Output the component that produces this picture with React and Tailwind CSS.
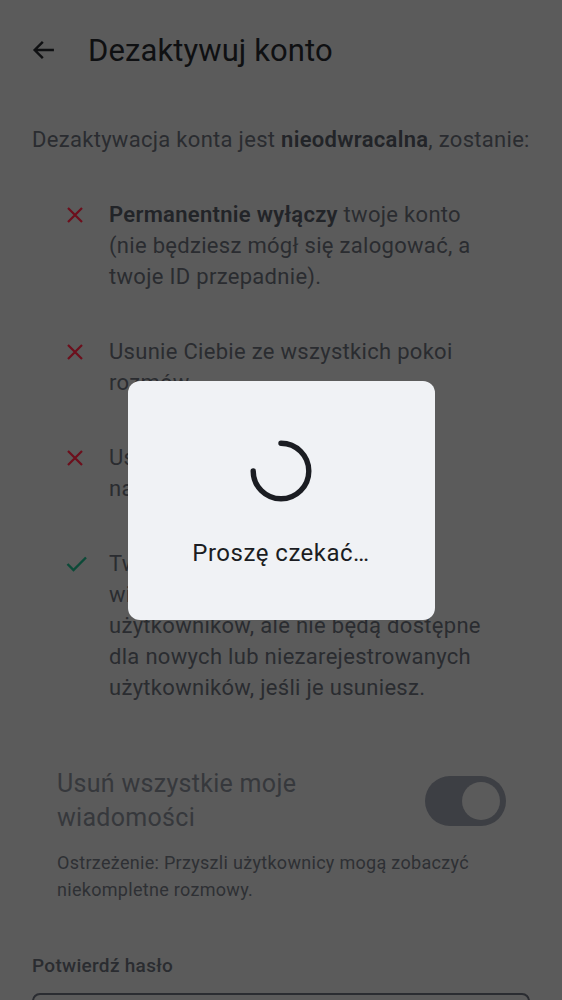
import React from 'react';

const XIcon = () => (
  <svg width="18" height="18" viewBox="0 0 18 18" className="shrink-0">
    <path d="M2 2 L16 16 M16 2 L2 16" stroke="#6d0f1c" strokeWidth="2.2" fill="none" />
  </svg>
);

const CheckIcon = () => (
  <svg width="22" height="18" viewBox="0 0 22 18" className="shrink-0">
    <path d="M1.5 9 L7.5 15 L20 2.5" stroke="#0c4a38" strokeWidth="2.4" fill="none" />
  </svg>
);

const items = [
  {
    ok: false,
    body: (
      <>
        <b className="font-semibold text-[#222428]">Permanentnie wyłączy</b> twoje konto (nie będziesz mógł się
        zalogować, a twoje ID przepadnie).
      </>
    ),
  },
  { ok: false, body: 'Usunie Ciebie ze wszystkich pokoi rozmów.' },
  {
    ok: false,
    body: (
      <>
        Usunie dane Twojego konta z
        <br />
        naszego serwera tożsamości.
      </>
    ),
  },
  {
    ok: true,
    body: 'Twoje wiadomości nadal będą widoczne dla zarejestrowanych użytkowników, ale nie będą dostępne dla nowych lub niezarejestrowanych użytkowników, jeśli je usuniesz.',
  },
];

export default function App() {
  return (
    <div
      className="relative h-screen w-full overflow-hidden bg-[#5b5b5b]"
      style={{ fontFamily: 'Roboto, "Noto Sans", sans-serif' }}
    >
      <header className="flex h-[100px] items-center pl-[30px]">
        <svg width="28" height="28" viewBox="0 0 24 24" className="shrink-0">
          <path d="M20.5 12 H4.5 M11 5 L4 12 L11 19" stroke="#0f1012" strokeWidth="2.1" fill="none" />
        </svg>
        <h1 className="ml-[30px] text-[31px] leading-none tracking-[0.1px] text-[#0f1012]">Dezaktywuj konto</h1>
      </header>

      <p className="mt-[24px] pl-[32px] text-[22px] leading-[31px] tracking-[0.3px] text-[#2a2c30]">
        Dezaktywacja konta jest <b className="font-semibold text-[#222428]">nieodwracalna</b>, zostanie:
      </p>

      <ul className="mt-[44px] flex flex-col gap-[44px] pl-[66px] pr-[64px]">
        {items.map((it, i) => (
          <li key={i} className="flex items-start">
            <div className="flex h-[31px] w-[43px] shrink-0 items-center">{it.ok ? <CheckIcon /> : <XIcon />}</div>
            <div className="text-[22px] leading-[31px] tracking-[0.3px] text-[#2a2c30]">{it.body}</div>
          </li>
        ))}
      </ul>

      <div className="mt-[64px] flex items-center justify-between pl-[57px] pr-[56px]">
        <div className="text-[25px] leading-[34px] tracking-[0.3px] text-[#36383c]">
          Usuń wszystkie moje
          <br />
          wiadomości
        </div>
        <div className="flex h-[50px] w-[81px] items-center justify-end rounded-full bg-[#3d3f44] pr-[6px]">
          <div className="h-[38px] w-[38px] rounded-full bg-[#5b5b5b]" />
        </div>
      </div>

      <p className="mt-[14px] pl-[57px] pr-[40px] text-[18px] leading-[27px] tracking-[0.3px] text-[#2e3034]">
        Ostrzeżenie: Przyszli użytkownicy mogą zobaczyć niekompletne rozmowy.
      </p>

      <label className="mt-[51px] block pl-[32px] text-[19px] font-medium leading-[24px] tracking-[0.3px] text-[#2a2c30]">
        Potwierdź hasło
      </label>
      <div className="mx-[32px] mt-[15px] h-[56px] rounded-[8px] border-2 border-[#2a2c31]" />

      <div className="absolute inset-0 flex items-center justify-center">
        <div className="flex h-[239px] w-[307px] flex-col items-center rounded-[12px] bg-[#f0f2f5] pt-[59px]">
          <svg width="62" height="62" viewBox="0 0 62 62">
            <path
              d="M31 3.2 A27.8 27.8 0 1 1 3.2 31"
              stroke="#1b1d22"
              strokeWidth="5.4"
              strokeLinecap="round"
              fill="none"
            />
          </svg>
          <div className="mt-[36px] text-[24px] leading-[30px] tracking-[0.5px] text-[#1b1d22]">Proszę czekać…</div>
        </div>
      </div>
    </div>
  );
}
